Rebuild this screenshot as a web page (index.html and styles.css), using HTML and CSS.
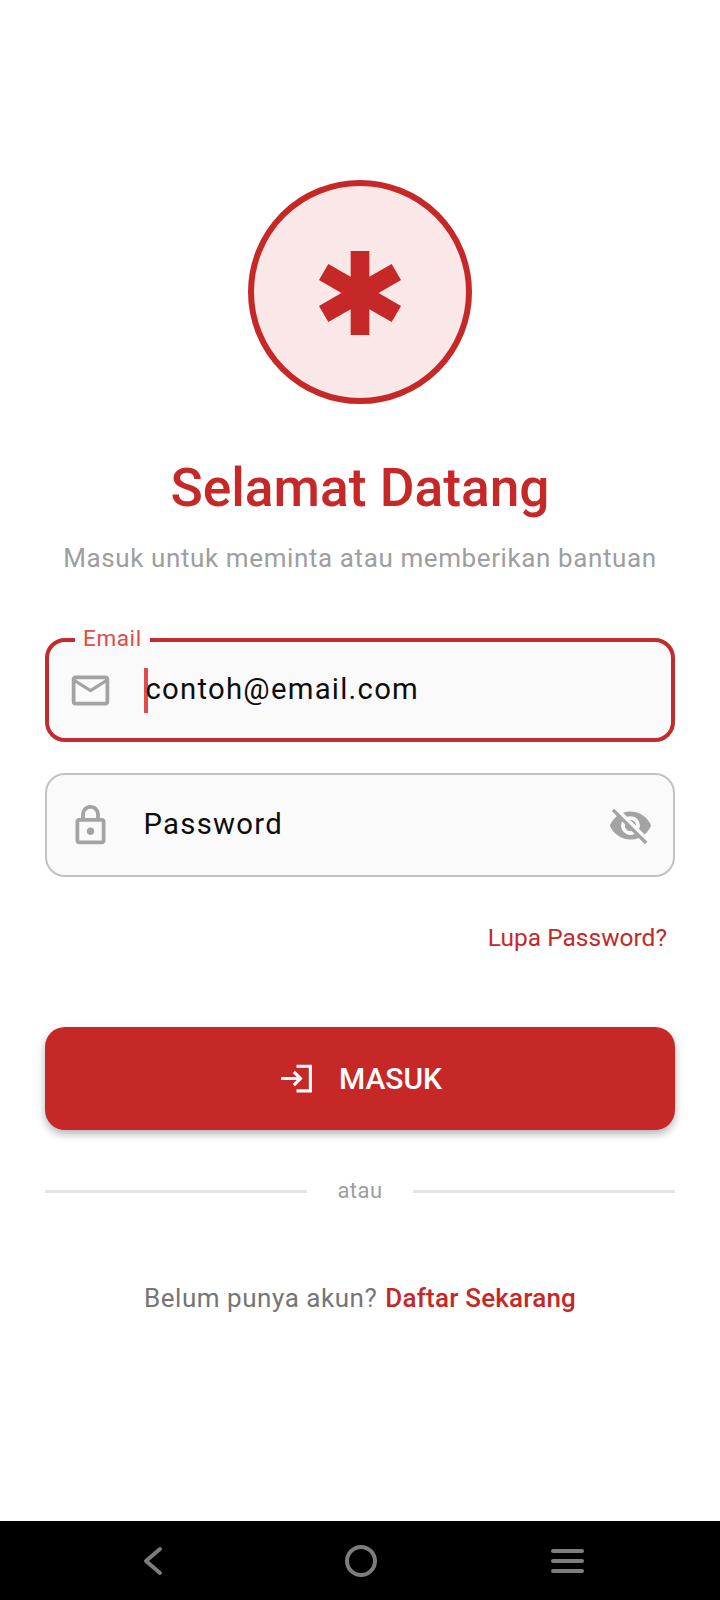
FILE: index.html
```html
<!DOCTYPE html>
<html lang="en">

<head>
  <meta charset="UTF-8">
  <meta name="viewport" content="width=device-width, initial-scale=1.0">
  <title>Selamat Datang</title>
  <link rel="stylesheet" href="styles.css">
</head>

<body>
  <main class="login">
    <div class="logo">
      <svg class="logo-icon" viewBox="0 0 24 24">
        <path d="M20.79,9.23l-2-3.46L14,8.54V3h-4v5.54L5.21,5.77l-2,3.46L8,12l-4.79,2.77l2,3.46L10,15.46V21h4v-5.54l4.79,2.77l2-3.46L16,12L20.79,9.23z" />
      </svg>
    </div>

    <h1 class="title">Selamat Datang</h1>
    <p class="subtitle">Masuk untuk meminta atau memberikan bantuan</p>

    <div class="field field-focus">
      <span class="field-label">Email</span>
      <svg class="field-icon" viewBox="0 0 24 24">
        <path d="M22 6c0-1.100-.9-2-2-2H4c-1.100 0-2 .9-2 2v12c0 1.100.9 2 2 2h16c1.100 0 2-.9 2-2V6zm-2 0l-8 5-8-5h16zm0 12H4V8l8 5 8-5v10z" />
      </svg>
      <span class="caret"></span>
      <span class="field-text field-text-email">contoh@email.com</span>
    </div>

    <div class="field">
      <svg class="field-icon" viewBox="0 0 24 24">
        <path d="M18 8h-1V6c0-2.760-2.240-5-5-5S7 3.240 7 6v2H6c-1.100 0-2 .9-2 2v10c0 1.100.9 2 2 2h12c1.100 0 2-.9 2-2V10c0-1.100-.9-2-2-2zM9 6c0-1.660 1.340-3 3-3s3 1.340 3 3v2H9V6zm9 14H6V10h12v10zm-6-3c1.100 0 2-.9 2-2s-.9-2-2-2-2 .9-2 2 .9 2 2 2z" />
      </svg>
      <span class="field-text">Password</span>
      <svg class="field-icon eye-icon" viewBox="0 0 24 24">
        <path d="M12 7c2.760 0 5 2.240 5 5 0 .65-.13 1.260-.36 1.830l2.920 2.920c1.510-1.260 2.700-2.890 3.430-4.750-1.730-4.390-6-7.500-11-7.500-1.400 0-2.740.25-3.980.7l2.160 2.160C10.740 7.130 11.350 7 12 7zM2 4.270l2.280 2.280.46.46C3.080 8.300 1.780 10.020 1 12c1.730 4.390 6 7.500 11 7.500 1.550 0 3.030-.3 4.380-.84l.42.42L19.730 22 21 20.730 3.270 3 2 4.270zM7.530 9.800l1.550 1.550c-.05.21-.08.43-.08.65 0 1.660 1.340 3 3 3 .22 0 .44-.03.65-.08l1.550 1.550c-.67.33-1.410.53-2.200.53-2.760 0-5-2.240-5-5 0-.79.2-1.530.53-2.200zm4.310-.78l3.150 3.150.02-.16c0-1.660-1.340-3-3-3l-.17.01z" />
      </svg>
    </div>

    <a class="forgot" href="#forgot">Lupa Password?</a>

    <button class="submit" type="button">
      <svg class="submit-icon" viewBox="0 0 24 24">
        <path d="M11 7L9.600 8.400l2.600 2.600H2v2h10.200l-2.600 2.600L11 17l5-5-5-5zm9 12h-8v2h10V3H12v2h8v14z" />
      </svg>
      MASUK
    </button>

    <div class="divider">
      <span class="divider-line"></span>
      <span class="divider-text">atau</span>
      <span class="divider-line"></span>
    </div>

    <p class="signup">Belum punya akun? <a href="#daftar">Daftar Sekarang</a></p>
  </main>

  <nav class="system-nav">
    <svg class="nav-back" viewBox="0 0 20 30">
      <path d="M17 3L3 15l14 12" />
    </svg>
    <span class="nav-home"></span>
    <span class="nav-menu">
      <span></span>
      <span></span>
      <span></span>
    </span>
  </nav>
</body>

</html>
```

FILE: styles.css
```css
* {
  margin: 0;
  padding: 0;
  box-sizing: border-box;
}

body {
  display: flex;
  flex-direction: column;
  height: 1600px;
  overflow: hidden;
  font-family: Roboto, sans-serif;
  background-color: #fff;
}

.login {
  display: flex;
  flex-direction: column;
  flex: 1;
  padding: 180px 45px 0;
}

/* Logo */
.logo {
  display: flex;
  align-items: center;
  justify-content: center;
  align-self: center;
  width: 224px;
  height: 224px;
  border: 6px solid #c62828;
  border-radius: 50%;
  background-color: #fae8e8;
}

.logo-icon {
  width: 112px;
  height: 112px;
  margin-top: 1px;
  fill: #c62828;
}

.title {
  margin-top: 53px;
  font-size: 53.300px;
  line-height: 62px;
  font-weight: 500;
  text-align: center;
  color: #c62828;
}

.subtitle {
  margin-top: 22px;
  font-size: 26px;
  line-height: 34px;
  letter-spacing: 0.6px;
  white-space: nowrap;
  text-align: center;
  color: #9e9e9e;
}

/* Fields */
.field {
  position: relative;
  display: flex;
  align-items: center;
  height: 104px;
  margin-top: 31px;
  padding: 0 20.500px;
  border: 2px solid #c2c2c2;
  border-radius: 20px;
  background-color: #fafafa;
}

.field-focus {
  margin-top: 63px;
  padding: 0 18.500px;
  border: 4px solid #c22c2c;
}

.field-label {
  position: absolute;
  top: -16px;
  left: 26px;
  padding: 0 8px;
  font-size: 22.500px;
  line-height: 24px;
  letter-spacing: 0.6px;
  color: #e04b4b;
  background: linear-gradient(#fff 50%, #fafafa 50%);
}

.field-icon {
  flex-shrink: 0;
  width: 45px;
  height: 45px;
  fill: #a3a3a3;
}

.field-text {
  margin-left: 31px;
  margin-bottom: 2px;
  font-size: 29.300px;
  line-height: 36px;
  letter-spacing: 1.250px;
  color: #0d0d0d;
}

.field-text-email {
  margin-left: -2px;
}

.caret {
  flex-shrink: 0;
  width: 4px;
  height: 45px;
  margin-left: 31px;
  background-color: #e04b4b;
}

.eye-icon {
  margin-left: auto;
}

.forgot {
  align-self: flex-end;
  margin-top: 47px;
  margin-right: 8px;
  font-size: 24.500px;
  line-height: 28px;
  color: #c62828;
  text-decoration: none;
}

/* Button */
.submit {
  display: flex;
  align-items: center;
  justify-content: center;
  gap: 24px;
  width: 100%;
  height: 103px;
  margin-top: 75px;
  border: 0;
  border-radius: 20px;
  font-family: inherit;
  font-size: 30px;
  font-weight: 500;
  color: #fff;
  background-color: #c62828;
  box-shadow: 0 4px 8px rgba(0, 0, 0, 0.3);
}

.submit-icon {
  width: 37px;
  height: 37px;
  fill: #fff;
}

.divider {
  display: flex;
  align-items: center;
  gap: 30px;
  margin-top: 47px;
}

.divider-line {
  flex: 1;
  height: 3px;
  background-color: #e4e4e6;
}

.divider-text {
  font-size: 22px;
  line-height: 28px;
  letter-spacing: 0.5px;
  color: #9e9e9e;
}

.signup {
  margin-top: 76px;
  font-size: 26px;
  line-height: 34px;
  letter-spacing: 0.54px;
  text-align: center;
  color: #757575;
}

.signup a {
  margin-left: 1px;
  font-weight: 500;
  letter-spacing: 0.2px;
  color: #c62828;
  text-decoration: none;
}

/* Android navigation bar */
.system-nav {
  display: flex;
  align-items: center;
  justify-content: space-between;
  flex-shrink: 0;
  height: 79px;
  padding: 0 136px 0 143px;
  background-color: #000;
}

.nav-back {
  width: 20px;
  height: 30px;
  margin-right: 8px;
  fill: none;
  stroke: #7d7d7d;
  stroke-width: 4;
  stroke-linecap: round;
  stroke-linejoin: round;
}

.nav-home {
  width: 32px;
  height: 32px;
  border: 4px solid #7d7d7d;
  border-radius: 50%;
}

.nav-menu {
  display: flex;
  flex-direction: column;
  gap: 6px;
  width: 33px;
}

.nav-menu span {
  height: 4px;
  border-radius: 2px;
  background-color: #7d7d7d;
}
```
